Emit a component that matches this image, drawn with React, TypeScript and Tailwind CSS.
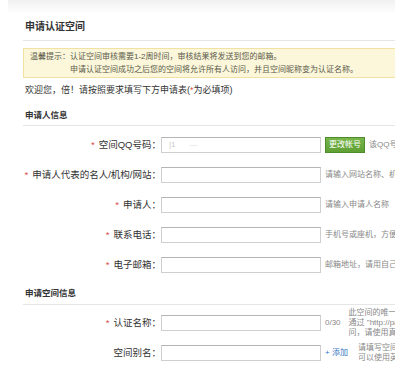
import type { ReactNode } from 'react';

const FONT = "font-['Liberation_Sans','Noto_Sans_CJK_SC',sans-serif]";

function Field({
  label,
  required = true,
  children,
  className = '',
}: {
  label: string;
  required?: boolean;
  children?: ReactNode;
  className?: string;
}) {
  return (
    <div className={`flex items-center whitespace-nowrap ${className}`}>
      <div className="flex w-[138px] shrink-0 justify-end text-[9.5px] leading-[16px] text-[#333]">
        <span>
          {required && <span className="mr-[4px] text-[#d9534f]">*</span>}
          {label}：
        </span>
      </div>
      <div className="h-[16px] w-[160px] shrink-0 border border-[#cfcfcf] border-t-[#b5b5b5] bg-white" />
      {children}
    </div>
  );
}

function Hint({ text }: { text: string }) {
  return <span className="ml-[4px] shrink-0 text-[8px] leading-[16px] text-[#888]">{text}</span>;
}

export default function App() {
  return (
    <div className={`relative h-[377px] w-[395px] overflow-hidden bg-white ${FONT}`}>
      <div className="ml-[8px] h-[14px] bg-gradient-to-b from-[#f1f1f1] to-white" />

      <div className="ml-[23px] mt-[6px] border-b border-[#e6e6e6] pb-[6px] pl-[2px] text-[10px] font-bold leading-[14px] text-[#333]">
        申请认证空间
      </div>

      <div className="ml-[23px] mt-[7px] flex h-[30px] whitespace-nowrap border border-r-0 border-[#f1e2a4] bg-[#fcf7da] pl-[6px] pt-[1px] text-[8px] leading-[13px] text-[#5a5a4a]">
        <span>温馨提示：</span>
        <div>
          <div>认证空间审核需要1-2周时间，审核结果将发送到您的邮箱。</div>
          <div>申请认证空间成功之后您的空间将允许所有人访问，并且空间昵称变为认证名称。</div>
        </div>
      </div>

      <div className="ml-[23px] mt-[5px] whitespace-nowrap pl-[2px] text-[9px] leading-[14px] text-[#333]">
        欢迎您，倍！请按照要求填写下方申请表(<span className="text-[#d9534f]">*</span>为必填项)
      </div>

      <div className="ml-[23px] mt-[12px] border-b border-[#e6e6e6] pb-[4px] pl-[2px] text-[8.5px] font-bold leading-[12px] text-[#333]">
        申请人信息
      </div>

      <div className="ml-[23px] mt-[11px] flex flex-col gap-[14px]">
        <Field label="空间QQ号码">
          <div className="-ml-[160px] flex w-[160px] shrink-0 items-center text-[8px] text-[#c8c8c8]">
            <span className="ml-[8px]">|1</span>
            <span className="ml-[14px] text-[#dcdcdc]">—</span>
          </div>
          <button
            type="button"
            className="ml-[4px] h-[16px] w-[40px] shrink-0 border border-[#4f8b2c] bg-gradient-to-b from-[#78b64a] to-[#5f9f33] text-[8px] leading-[14px] text-white"
          >
            更改帐号
          </button>
          <Hint text="该QQ号码将作为认证空间的帐号" />
        </Field>
        <Field label="申请人代表的名人/机构/网站">
          <Hint text="请输入网站名称、机构名称或名人姓名" />
        </Field>
        <Field label="申请人">
          <Hint text="请输入申请人名称" />
        </Field>
        <Field label="联系电话">
          <Hint text="手机号或座机，方便我们联系您" />
        </Field>
        <Field label="电子邮箱">
          <Hint text="邮箱地址，请用自己常用的邮箱" />
        </Field>
      </div>

      <div className="ml-[23px] mt-[14px] border-b border-[#e6e6e6] pb-[5px] pl-[2px] text-[8.5px] font-bold leading-[12px] text-[#333]">
        申请空间信息
      </div>

      <div className="ml-[23px] mt-[3px] flex flex-col">
        <Field label="认证名称">
          <span className="ml-[4px] shrink-0 text-[8px] text-[#888]">0/30</span>
          <div className="ml-[8px] shrink-0 text-[8px] leading-[10px] text-[#888]">
            <div>此空间的唯一标识名称，</div>
            <div>通过 "http://page.qq.com/" 访</div>
            <div>问，请使用真实有效的名称</div>
          </div>
        </Field>
        <Field label="空间别名" required={false} className="mt-[5px]">
          <span className="ml-[4px] shrink-0 text-[8px] text-[#2f78c4]">+ 添加</span>
          <div className="ml-[10px] shrink-0 text-[8px] leading-[10px] text-[#888]">
            <div>请填写空间别名，</div>
            <div>可以使用英文或数字</div>
          </div>
        </Field>
      </div>
    </div>
  );
}
